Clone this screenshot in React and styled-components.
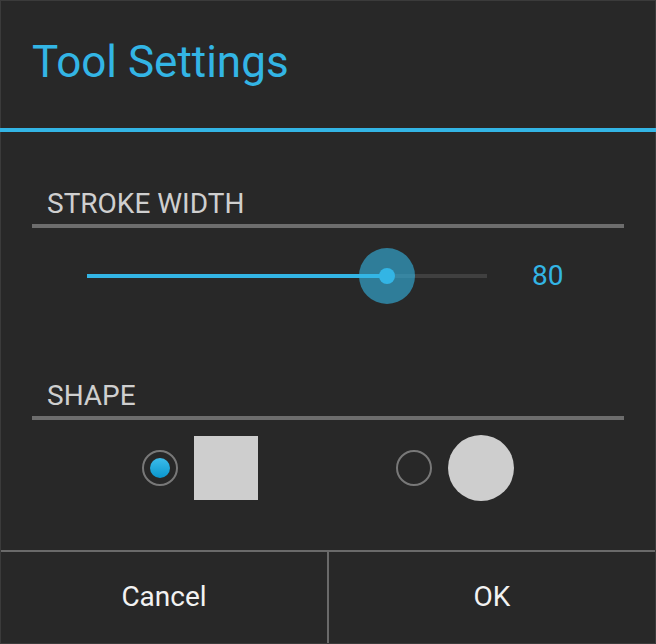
import React, { useState } from "react";
import styled, { createGlobalStyle } from "styled-components";

const GlobalStyle = createGlobalStyle`
	* {
		box-sizing: border-box;
	}
	html, body {
		margin: 0;
		padding: 0;
		background: #282828;
	}
	body {
		font-family: Roboto, "Noto Sans", sans-serif;
	}
`;

const Dialog = styled.div`
	width: 656px;
	height: 644px;
	display: flex;
	flex-direction: column;
	background: #282828;
	border: 1px solid #3b3b3b;
`;

const Title = styled.div`
	height: 131px;
	margin: 0 -1px;
	padding: 39px 0 0 32px;
	font-size: 44px;
	line-height: 44px;
	color: #33b5e5;
	border-bottom: 4px solid #33b5e5;
`;

const Body = styled.div`
	flex: 1;
	display: flex;
	flex-direction: column;
	padding: 0 31px;
`;

const SectionHeader = styled.div`
	margin-top: ${(props) => props.top}px;
	padding: 0 0 6px 15px;
	font-size: 28px;
	line-height: 28px;
	color: #cfcfcf;
	border-bottom: 4px solid #6d6d6d;
`;

const SliderRow = styled.div`
	display: flex;
	align-items: center;
	height: 56px;
	margin-top: 20px;
	padding-left: 55px;
	gap: 45px;
`;

const Track = styled.div`
	position: relative;
	width: 400px;
	height: 4px;
	background: #404040;
`;

const Fill = styled.div`
	height: 100%;
	background: #33b5e5;
`;

const Thumb = styled.div`
	position: absolute;
	top: 50%;
	width: 56px;
	height: 56px;
	margin: -28px 0 0 -28px;
	border-radius: 50%;
	background: rgba(51, 181, 229, 0.6);
	display: flex;
	align-items: center;
	justify-content: center;
`;

const ThumbDot = styled.div`
	width: 16px;
	height: 16px;
	border-radius: 50%;
	background: #33b5e5;
`;

const Value = styled.div`
	font-size: 28px;
	line-height: 28px;
	color: #33b5e5;
`;

const RadioRow = styled.div`
	display: flex;
	align-items: center;
	justify-content: space-between;
	height: 66px;
	margin-top: 15px;
	padding: 0 110px;
`;

const Option = styled.label`
	display: flex;
	align-items: center;
	gap: 16px;
	cursor: pointer;
`;

const Ring = styled.span`
	width: 36px;
	height: 36px;
	border-radius: 50%;
	border: 2px solid #787878;
	display: flex;
	align-items: center;
	justify-content: center;
`;

const Dot = styled.span`
	width: 20px;
	height: 20px;
	border-radius: 50%;
	background: linear-gradient(180deg, #3cbcea 0%, #0a96cd 100%);
`;

const Shape = styled.span`
	display: block;
	width: ${(props) => (props.round ? 66 : 64)}px;
	height: ${(props) => (props.round ? 66 : 64)}px;
	border-radius: ${(props) => (props.round ? "50%" : "0")};
	background: #cecece;
`;

const Footer = styled.div`
	display: flex;
	height: 93px;
	border-top: 2px solid #6a6a6a;
`;

const Button = styled.button`
	flex: 1;
	display: flex;
	align-items: center;
	justify-content: center;
	padding: 0 0 2px;
	border: none;
	border-right: ${(props) => (props.divider ? "2px solid #6a6a6a" : "none")};
	background: transparent;
	font-family: Roboto, "Noto Sans", sans-serif;
	font-size: 28px;
	line-height: 28px;
	color: #f2f2f2;
	cursor: pointer;
`;

export default function App() {
	const [shape, setShape] = useState("square");
	const value = 80;
	const fill = 300;

	return (
		<>
			<GlobalStyle />
			<Dialog>
				<Title>Tool Settings</Title>
				<Body>
					<SectionHeader top={58}>STROKE WIDTH</SectionHeader>
					<SliderRow>
						<Track>
							<Fill style={{ width: fill }} />
							<Thumb style={{ left: fill }}>
								<ThumbDot />
							</Thumb>
						</Track>
						<Value>{value}</Value>
					</SliderRow>
					<SectionHeader top={78}>SHAPE</SectionHeader>
					<RadioRow>
						<Option onClick={() => setShape("square")}>
							<Ring>{shape === "square" && <Dot />}</Ring>
							<Shape />
						</Option>
						<Option onClick={() => setShape("circle")}>
							<Ring>{shape === "circle" && <Dot />}</Ring>
							<Shape round />
						</Option>
					</RadioRow>
				</Body>
				<Footer>
					<Button divider>Cancel</Button>
					<Button>OK</Button>
				</Footer>
			</Dialog>
		</>
	);
}
